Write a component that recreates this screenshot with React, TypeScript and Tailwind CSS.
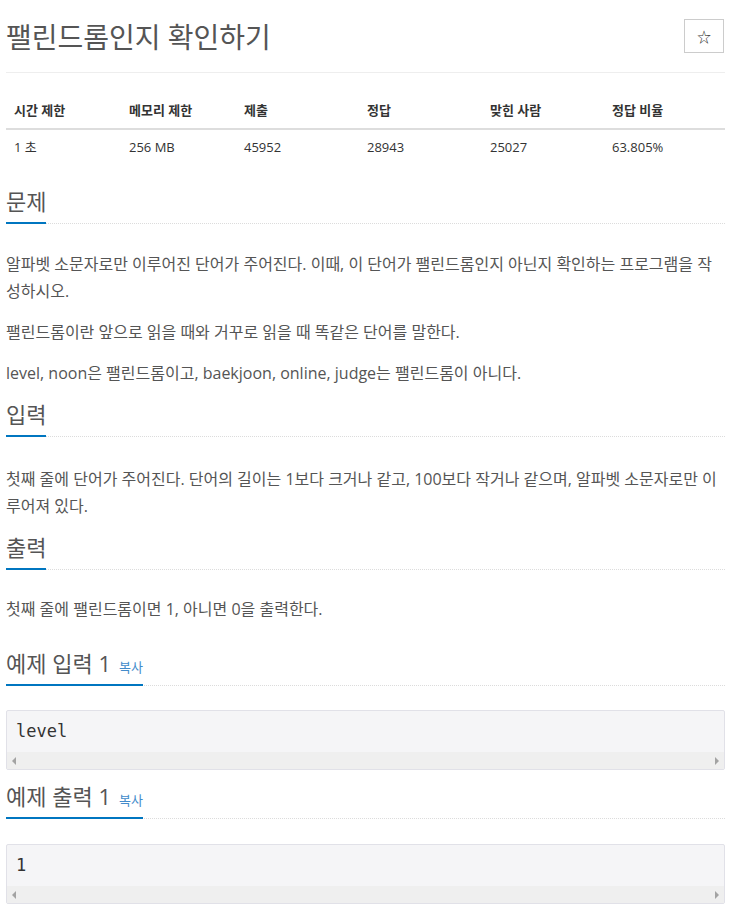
const font = "font-['Open_Sans','Noto_Sans_CJK_KR',sans-serif]";

function Heading({ title, copy }: { title: string; copy?: boolean }) {
  return (
    <h2 className="flex border-b border-dotted border-[#dcdcdc] text-[22px] leading-[30px] font-normal text-[#555]">
      <span className="flex items-baseline border-b-2 border-[#0076c0] pb-[6px] -mb-px">
        {title}
        {copy && <span className="ml-[8px] text-[13px] leading-[20px] text-[#428bca]">복사</span>}
      </span>
    </h2>
  );
}

function SampleBox({ text }: { text: string }) {
  return (
    <div className="border border-[#e1e1e8] bg-[#f5f5f7] rounded-[2px]">
      <pre className="px-[9px] pt-[8px] pb-[9px] text-[17px] leading-[24px] text-[#333] font-['DejaVu_Sans_Mono',monospace]">
        {text}
      </pre>
      <div className="h-[17px] bg-[#efefef] flex items-center justify-between px-[5px]">
        <svg width="4" height="8" viewBox="0 0 4 8">
          <path d="M4 0 L0 4 L4 8 Z" fill="#a3a3a3" />
        </svg>
        <svg width="4" height="8" viewBox="0 0 4 8">
          <path d="M0 0 L4 4 L0 8 Z" fill="#a3a3a3" />
        </svg>
      </div>
    </div>
  );
}

export default function App() {
  const heads = ["시간 제한", "메모리 제한", "제출", "정답", "맞힌 사람", "정답 비율"];
  const vals = ["1 초", "256 MB", "45952", "28943", "25027", "63.805%"];

  return (
    <div className={`${font} bg-white w-[736px] min-h-[919px] text-[#555]`}>
      <div className="ml-[6px] w-[719px]">
        {/* Title */}
        <div className="flex items-center justify-between h-[73px] border-b border-[#eee]">
          <h1 className="text-[28px] font-normal text-[#555] leading-none mt-[2px]">팰린드롬인지 확인하기</h1>
          <button className="w-[40px] h-[34px] border border-[#ccc] bg-white flex items-center justify-center text-[14px] text-[#333] mr-px">
            ☆
          </button>
        </div>

        {/* Stats table */}
        <div className="mt-[20px] text-[13px] text-[#333]">
          <div className="grid grid-cols-[115px_115px_123px_123px_122px_1fr] h-[37px] items-center border-b-2 border-[#ddd] font-bold px-[8px]">
            {heads.map((h) => (
              <div key={h}>{h}</div>
            ))}
          </div>
          <div className="grid grid-cols-[115px_115px_123px_123px_122px_1fr] h-[36px] items-center px-[8px]">
            {vals.map((v) => (
              <div key={v}>{v}</div>
            ))}
          </div>
        </div>

        {/* 문제 */}
        <div className="mt-[20px]">
          <Heading title="문제" />
        </div>
        <div className="mt-[27px] text-[16px] leading-[27px] text-[#555]">
          <p className="mb-[14px]">
            알파벳 소문자로만 이루어진 단어가 주어진다. 이때, 이 단어가 팰린드롬인지 아닌지 확인하는 프로그램을 작성하시오.
          </p>
          <p className="mb-[14px]">팰린드롬이란 앞으로 읽을 때와 거꾸로 읽을 때 똑같은 단어를 말한다.</p>
          <p>level, noon은 팰린드롬이고, baekjoon, online, judge는 팰린드롬이 아니다.</p>
        </div>

        {/* 입력 */}
        <div className="mt-[12px]">
          <Heading title="입력" />
        </div>
        <div className="mt-[29px] text-[16px] leading-[27px] text-[#555]">
          <p>
            첫째 줄에 단어가 주어진다. 단어의 길이는 1보다 크거나 같고, 100보다 작거나 같으며, 알파벳 소문자로만 이루어져 있다.
          </p>
        </div>

        {/* 출력 */}
        <div className="mt-[12px]">
          <Heading title="출력" />
        </div>
        <div className="mt-[26px] text-[16px] leading-[27px] text-[#555]">
          <p>첫째 줄에 팰린드롬이면 1, 아니면 0을 출력한다.</p>
        </div>

        {/* 예제 입력 */}
        <div className="mt-[25px]">
          <Heading title="예제 입력 1" copy />
        </div>
        <div className="mt-[24px]">
          <SampleBox text="level" />
        </div>

        {/* 예제 출력 */}
        <div className="mt-[11px]">
          <Heading title="예제 출력 1" copy />
        </div>
        <div className="mt-[25px]">
          <SampleBox text="1" />
        </div>
      </div>
    </div>
  );
}
